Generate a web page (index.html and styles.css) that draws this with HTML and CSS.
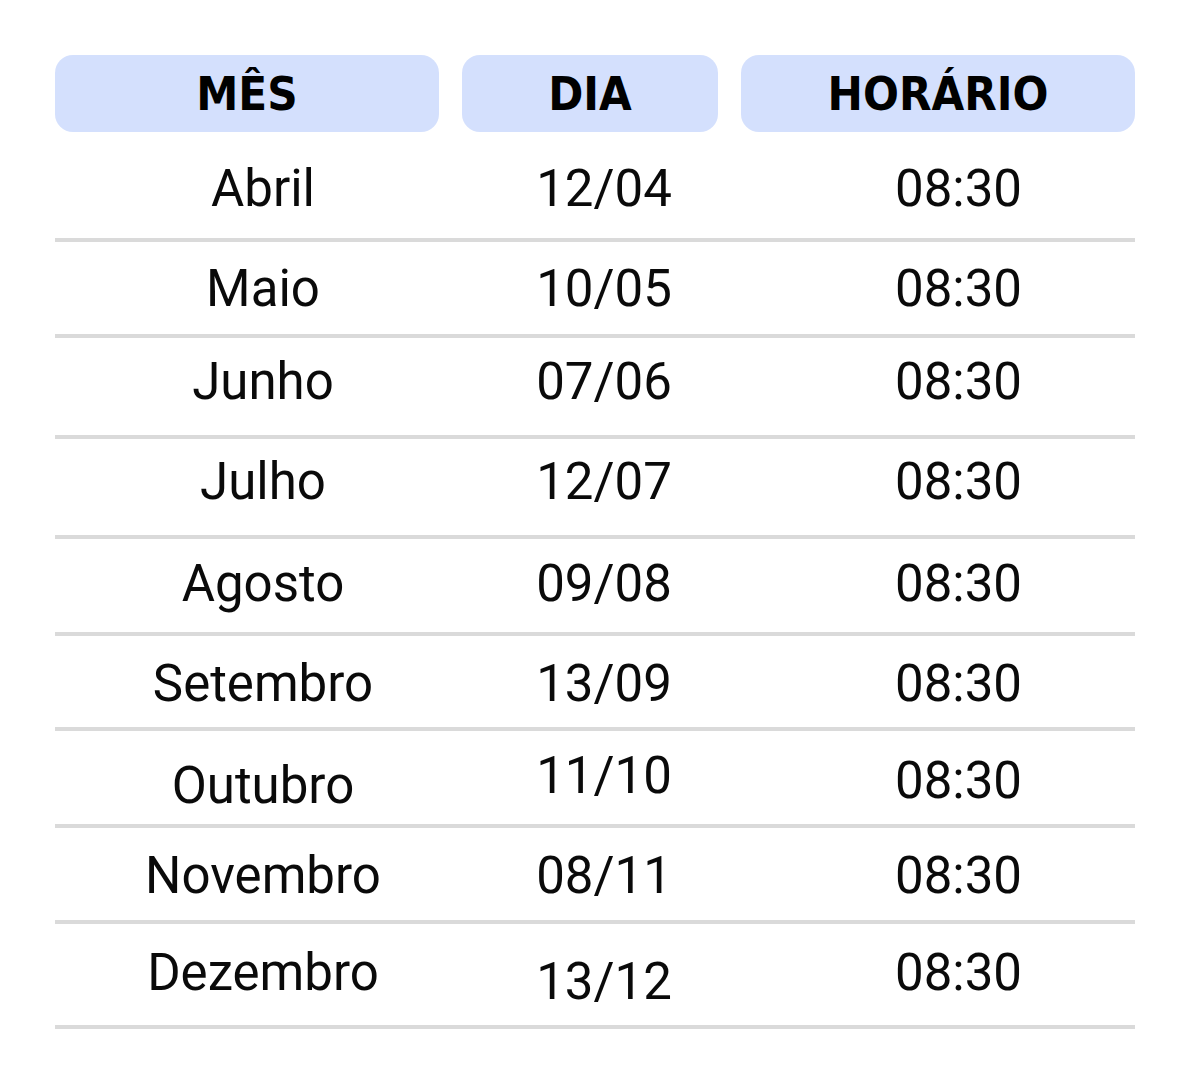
FILE: index.html
```html
<!DOCTYPE html>
<html lang="pt-BR">
<head>
<meta charset="utf-8">
<title>Calendário</title>
<link rel="stylesheet" href="styles.css">
</head>
<body>
<div class="schedule">
  <div class="head">
    <div class="pill">MÊS</div>
    <div class="pill">DIA</div>
    <div class="pill">HORÁRIO</div>
  </div>
  <div class="rows">
    <div class="row"><div class="cell">Abril</div><div class="cell">12/04</div><div class="cell time">08:30</div></div>
    <div class="row"><div class="cell">Maio</div><div class="cell">10/05</div><div class="cell time">08:30</div></div>
    <div class="row"><div class="cell">Junho</div><div class="cell">07/06</div><div class="cell time">08:30</div></div>
    <div class="row"><div class="cell">Julho</div><div class="cell">12/07</div><div class="cell time">08:30</div></div>
    <div class="row"><div class="cell">Agosto</div><div class="cell">09/08</div><div class="cell time">08:30</div></div>
    <div class="row"><div class="cell">Setembro</div><div class="cell">13/09</div><div class="cell time">08:30</div></div>
    <div class="row"><div class="cell down">Outubro</div><div class="cell up">11/10</div><div class="cell time">08:30</div></div>
    <div class="row"><div class="cell">Novembro</div><div class="cell">08/11</div><div class="cell time">08:30</div></div>
    <div class="row"><div class="cell">Dezembro</div><div class="cell down-more">13/12</div><div class="cell time">08:30</div></div>
  </div>
</div>
</body>
</html>
```
FILE: styles.css
```css
html, body {
  margin: 0;
  padding: 0;
  background: #ffffff;
}

.schedule {
  width: 1080px;
  padding: 55px 0 0 55px;
  color: #0a0a0a;
}

.head {
  display: grid;
  grid-template-columns: 384px 256px 394px;
  column-gap: 23px;
}

.pill {
  height: 77px;
  border-radius: 18px;
  background: #d4e0fd;
  display: flex;
  align-items: center;
  justify-content: center;
  font-family: "DejaVu Sans Condensed", "DejaVu Sans", sans-serif;
  font-stretch: condensed;
  font-weight: bold;
  font-size: 47px;
  line-height: 1;
  color: #000;
}

.row {
  display: grid;
  grid-template-columns: 416px 266px 1fr;
  align-items: start;
  border-bottom: 4px solid #dadada;
  box-sizing: border-box;
  font-family: Roboto, "Liberation Sans", sans-serif;
  font-size: 51px;
  line-height: 51px;
}

.cell {
  text-align: center;
  white-space: nowrap;
}

.cell.time {
  padding-left: 45px;
}

.cell.down { margin-top: 5px; }
.cell.up { margin-top: -5px; }
.cell.down-more { margin-top: 9px; }

.row:nth-child(1) { height: 110px; padding-top: 31px; }
.row:nth-child(2) { height: 96px;  padding-top: 21px; }
.row:nth-child(3) { height: 101px; padding-top: 18px; }
.row:nth-child(4) { height: 100px; padding-top: 17px; }
.row:nth-child(5) { height: 97px;  padding-top: 19px; }
.row:nth-child(6) { height: 95px;  padding-top: 22px; }
.row:nth-child(7) { height: 97px;  padding-top: 24px; }
.row:nth-child(8) { height: 96px;  padding-top: 22px; }
.row:nth-child(9) { height: 105px; padding-top: 23px; }
```
